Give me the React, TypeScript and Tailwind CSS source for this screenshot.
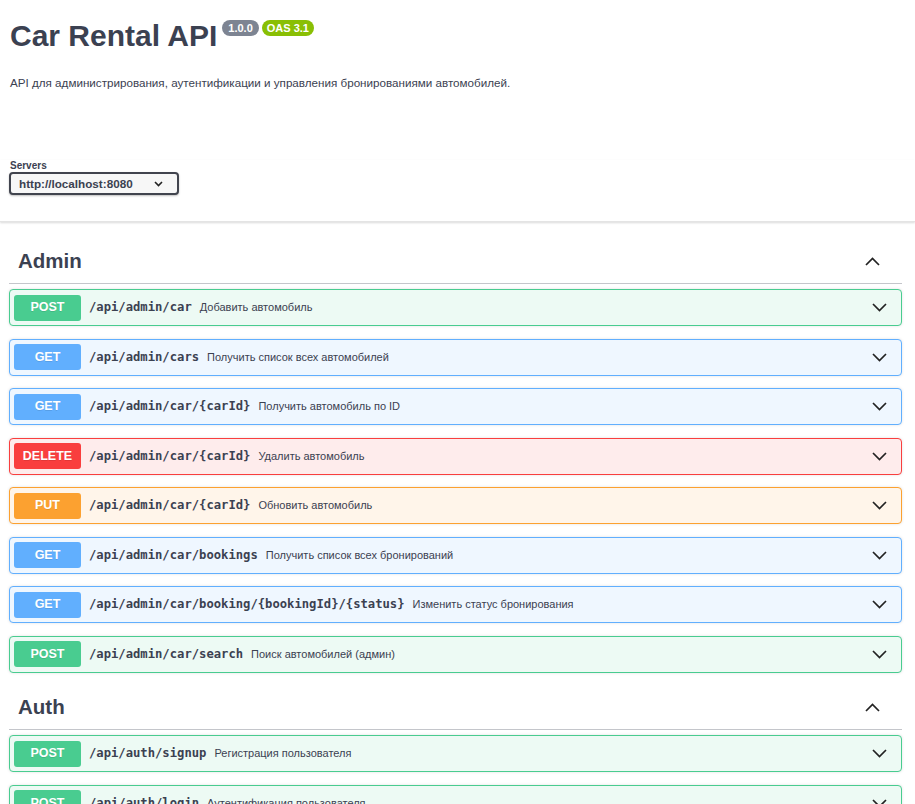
import React from "react";

type Op = { method: "POST" | "GET" | "DELETE" | "PUT"; path: string; desc: string };

const styles: Record<Op["method"], { row: string; badge: string }> = {
  POST: { row: "bg-[#edfaf4] border-[#49cc90]", badge: "bg-[#49cc90]" },
  GET: { row: "bg-[#eff7ff] border-[#61affe]", badge: "bg-[#61affe]" },
  DELETE: { row: "bg-[#feecec] border-[#f93e3e]", badge: "bg-[#f93e3e]" },
  PUT: { row: "bg-[#fff5ea] border-[#fca130]", badge: "bg-[#fca130]" },
};

const admin: Op[] = [
  { method: "POST", path: "/api/admin/car", desc: "Добавить автомобиль" },
  { method: "GET", path: "/api/admin/cars", desc: "Получить список всех автомобилей" },
  { method: "GET", path: "/api/admin/car/{carId}", desc: "Получить автомобиль по ID" },
  { method: "DELETE", path: "/api/admin/car/{carId}", desc: "Удалить автомобиль" },
  { method: "PUT", path: "/api/admin/car/{carId}", desc: "Обновить автомобиль" },
  { method: "GET", path: "/api/admin/car/bookings", desc: "Получить список всех бронирований" },
  { method: "GET", path: "/api/admin/car/booking/{bookingId}/{status}", desc: "Изменить статус бронирования" },
  { method: "POST", path: "/api/admin/car/search", desc: "Поиск автомобилей (админ)" },
];

const auth: Op[] = [
  { method: "POST", path: "/api/auth/signup", desc: "Регистрация пользователя" },
  { method: "POST", path: "/api/auth/login", desc: "Аутентификация пользователя" },
];

function ChevronDown({ className }: { className?: string }) {
  return (
    <svg className={className} width="15" height="9" viewBox="0 0 15 9" fill="none">
      <path d="M1 1l6.5 6.5L14 1" stroke="#222" strokeWidth="1.7" />
    </svg>
  );
}

function ChevronUp({ className }: { className?: string }) {
  return (
    <svg className={className} width="15" height="9" viewBox="0 0 15 9" fill="none">
      <path d="M1 8l6.5-6.5L14 8" stroke="#222" strokeWidth="1.7" />
    </svg>
  );
}

function Row({ op }: { op: Op }) {
  const s = styles[op.method];
  return (
    <div className={`flex items-center h-[37px] mb-[12.5px] border rounded-[4px] px-[4px] shadow-[0_0_3px_rgba(0,0,0,0.12)] ${s.row}`}>
      <div
        className={`w-[67px] h-[26px] rounded-[3px] flex items-center justify-center text-white font-bold text-[12.5px] [text-shadow:0_1px_0_rgba(0,0,0,0.1)] ${s.badge}`}
      >
        {op.method}
      </div>
      <div className="ml-[8px] font-['DejaVu_Sans_Mono',monospace] font-bold text-[12.2px] text-[#3b4151]">
        {op.path}
      </div>
      <div className="ml-[8px] text-[11px] text-[#3b4151]">{op.desc}</div>
      <ChevronDown className="ml-auto mr-[10px]" />
    </div>
  );
}

function Section({ title, ops }: { title: string; ops: Op[] }) {
  return (
    <div>
      <div className="flex items-center h-[45px] border-b border-[#c4c6cb] pl-[9px] pr-[22px] mb-[5px]">
        <h3 className="text-[20.5px] font-bold text-[#3b4151]">{title}</h3>
        <ChevronUp className="ml-auto" />
      </div>
      {ops.map((op, i) => (
        <Row key={i} op={op} />
      ))}
    </div>
  );
}

export default function App() {
  return (
    <div className="w-[915px] h-[804px] overflow-hidden bg-white text-[#3b4151] font-['Liberation_Sans','Noto_Sans',sans-serif]">
      <div className="pl-[10px] pt-[18px]">
        <div className="flex items-start">
          <h2 className="text-[30px] leading-[36px] font-bold text-[#3b4151]">Car Rental API</h2>
          <span className="ml-[5px] mt-[2px] h-[16px] px-[6px] rounded-full bg-[#7d8492] text-white text-[11px] font-bold leading-[16px]">
            1.0.0
          </span>
          <span className="ml-[3px] mt-[2px] h-[16px] px-[5px] rounded-full bg-[#89bf04] text-white text-[11px] font-bold leading-[16px]">
            OAS 3.1
          </span>
        </div>
        <p className="mt-[21px] text-[11.65px] leading-[16px]">
          API для администрирования, аутентификации и управления бронированиями автомобилей.
        </p>
      </div>
      <div className="pb-[26px] shadow-[0_1px_2px_0_rgba(0,0,0,0.15)] border-b border-[#e4e4e4]">
        <div className="pl-[10px] mt-[69px] text-[10px] leading-[12px] font-bold">Servers</div>
        <div className="ml-[9px] w-[170px] h-[23px] border-2 border-[#41444e] rounded-[4px] bg-[#f7f7f7] shadow-[0_1px_2px_0_rgba(0,0,0,0.25)] flex items-center pl-[8px] pr-[14px]">
          <span className="text-[11.7px] font-bold">http://localhost:8080</span>
          <svg className="ml-auto" width="9" height="6" viewBox="0 0 9 6" fill="none">
            <path d="M1 1l3.5 3.5L8 1" stroke="#222" strokeWidth="1.6" />
          </svg>
        </div>
      </div>
      <div className="pl-[9px] pt-[17px]">
        <div className="w-[893px]">
          <Section title="Admin" ops={admin} />
          <Section title="Auth" ops={auth} />
        </div>
      </div>
    </div>
  );
}
